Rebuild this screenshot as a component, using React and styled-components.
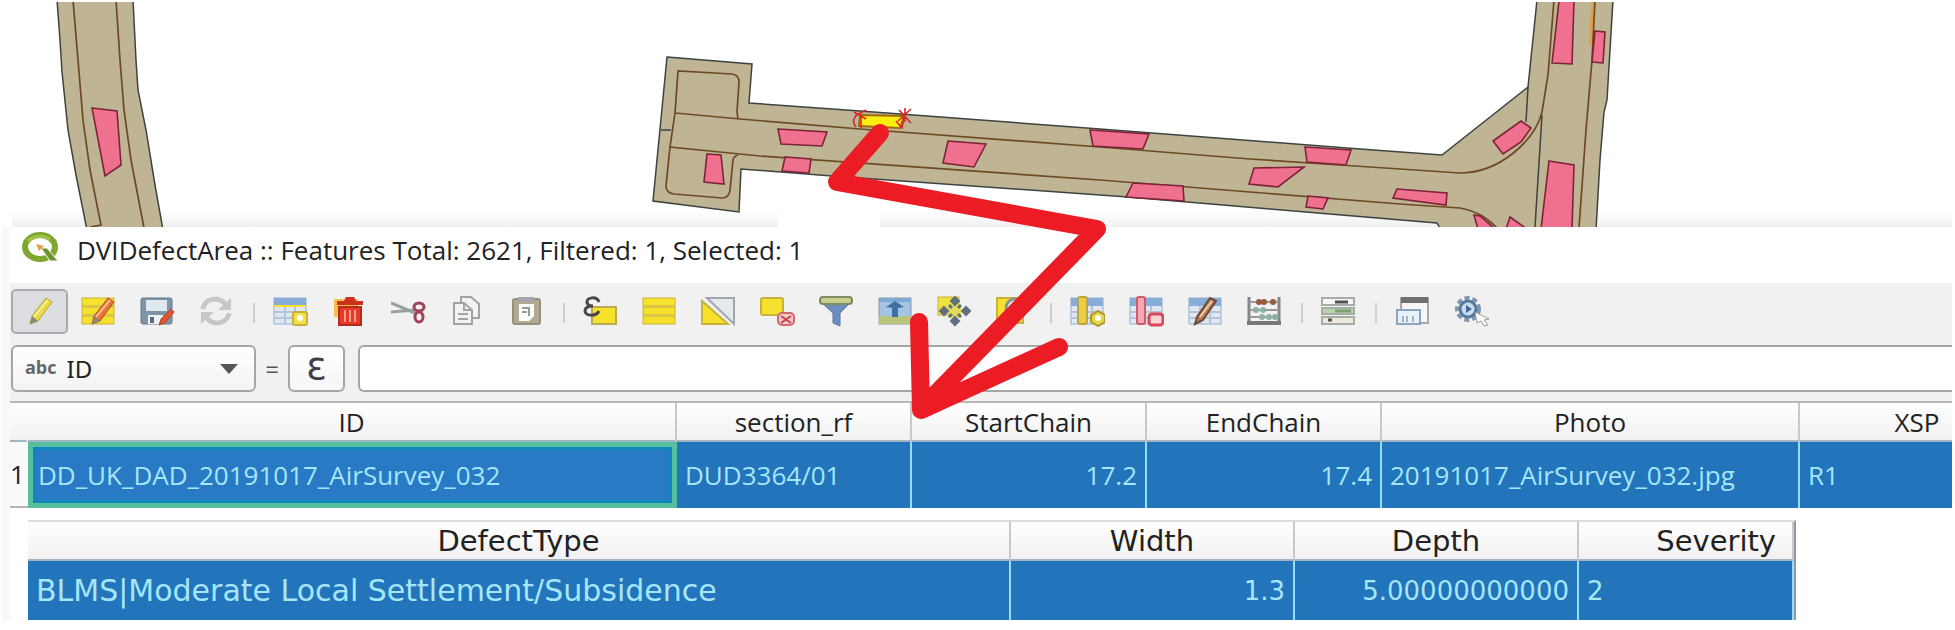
import React from 'react'
import styled, { createGlobalStyle } from 'styled-components'

const GlobalStyle = createGlobalStyle`
  * {
    box-sizing: border-box;
  }

  body {
    margin: 0;
    background: #fff;
    font-family: 'Open Sans', 'Noto Sans', sans-serif;
    color: #222;
  }
`

const Page = styled.main`
  position: relative;
  overflow: hidden;
`

const MapCanvas = styled.svg`
  display: block;
  width: 100%;
`

const Arrow = styled.svg`
  position: absolute;
  top: 0;
  left: 0;
  width: 100%;
  pointer-events: none;
`

const AttributeWindow = styled.section`
  margin-right: 3px;
  padding-left: 10px;
  background: linear-gradient(90deg, #fff 2px, #f7f7f7 2px, #f9f9f9 10px, #fff 10px);
`

const TitleBar = styled.header`
  display: flex;
  align-items: flex-start;
  gap: 18px;
  height: 56px;
  padding: 5px 10px 0;
  background: #fff;

  > h1 {
    margin: 0;
    font-size: 26px;
    font-weight: 400;
    line-height: 36px;
    white-space: nowrap;
  }

  > svg {
    flex: none;
  }
`

const Toolbar = styled.div`
  display: flex;
  gap: 2px;
  padding: 6px 1px 11px;
  background: #f1f1f1;
`

const ToolButton = styled.button`
  display: flex;
  flex: none;
  align-items: center;
  justify-content: center;
  width: 57px;
  height: 45px;
  padding: 0;
  border: 2px solid ${({ $active }) => ($active ? '#a9abae' : 'transparent')};
  border-radius: 5px;
  background: ${({ $active }) => ($active ? '#dcdde0' : 'transparent')};
`

const Separator = styled.span`
  flex: none;
  width: 13px;
  height: 20px;
  margin-top: 14px;
  background: linear-gradient(#cfcfcf, #cfcfcf) center / 2px 100% no-repeat;
`

const FilterBar = styled.form`
  display: flex;
  align-items: center;
  padding: 0 0 9px 1px;
  background: #f1f1f1;
`

const FieldPicker = styled.label`
  display: flex;
  flex: none;
  align-items: center;
  gap: 10px;
  width: 245px;
  height: 47px;
  padding: 0 16px 0 12px;
  border: 2px solid #a6a6a6;
  border-radius: 6px;
  background: linear-gradient(#fff, #f3f3f3);

  > span {
    padding-bottom: 4px;
    color: #666;
    font-size: 18px;
    font-weight: 700;
  }

  > select {
    flex: 1;
    appearance: none;
    padding: 0;
    border: 0;
    background: transparent;
    color: #222;
    font-family: 'Noto Sans', sans-serif;
    font-size: 24px;
  }
`

const Equals = styled.span`
  width: 32px;
  color: #555;
  font-size: 24px;
  text-align: center;
`

const ExpressionButton = styled.button`
  flex: none;
  width: 57px;
  height: 47px;
  margin-right: 13px;
  padding: 0 0 6px;
  border: 2px solid #a6a6a6;
  border-radius: 6px;
  background: linear-gradient(#fff, #f6f6f6);
  color: #443c48;
  font-family: 'DejaVu Sans', sans-serif;
  font-size: 38px;
  line-height: 1;
`

const FilterInput = styled.input`
  flex: 1;
  min-width: 0;
  height: 47px;
  padding: 0 12px;
  border: 2px solid #a6a6a6;
  border-right: 0;
  border-radius: 6px 0 0 6px;
  background: #fff;
  font-size: 24px;
`

const Grid = styled.div`
  overflow: hidden;
  border-top: 2px solid #b9b9b9;
`

const Table = styled.table`
  table-layout: fixed;
  width: ${({ $width }) => $width}px;
  border-collapse: separate;
  border-spacing: 0;
  font-family: ${({ $font }) => $font};
`

const HeadCell = styled.th`
  height: 39px;
  padding: 0 ${({ $align }) => ($align ? 16 : 0)}px 0 0;
  border-right: 2px solid ${({ $plain }) => ($plain ? 'transparent' : '#c9c9c9')};
  border-bottom: 2px solid #a3b4c4;
  background: linear-gradient(#fff, #f1f1f1);
  background-clip: border-box;
  color: #222;
  font-size: ${({ $size }) => $size}px;
  font-weight: 400;
  line-height: 32px;
  text-align: ${({ $align }) => $align || 'center'};
`

const Cell = styled.td`
  height: ${({ $height }) => $height}px;
  padding: 0 8px;
  border-right: 2px solid #9adcf6;
  background: #2274bb;
  color: #a6e6fa;
  font-size: ${({ $size }) => $size}px;
  line-height: 32px;
  text-align: ${({ $align }) => $align || 'left'};
  white-space: nowrap;
`

const CurrentCell = styled(Cell)`
  border: 5px solid #55bfa0;
  padding-left: 5px;
  background: #287ac4;
  box-shadow: inset 0 0 0 3px #1087b8;
`

const RowNumber = styled.th`
  padding: 0;
  border-bottom: 2px solid #b5b5b5;
  background: #fafafa;
  font-size: 26px;
  font-weight: 400;
  text-align: left;
`

const DetailGrid = styled.div`
  width: 1768px;
  margin: 12px 0 9px 18px;
  border-top: 2px solid #dcdcdc;
  border-right: 2px solid #8d99a8;
`

const yellow = '#f6e12c'
const olive = '#c9b23a'

const Pencil = ({ fill, edge }) => (
  <g>
    <path d="M8 28 L10 20 L24 2 L30 6 L16 25 Z" fill={fill} stroke={edge} />
    <path d="M8 28 L10 20 L16 25 Z" fill="#8a8878" />
    <path d="M12 21 L26 4" stroke="#fff" strokeOpacity=".5" strokeWidth="2" />
  </g>
)

const Bars = () => (
  <g fill={yellow} stroke={olive}>
    <rect x="1" y="2" width="32" height="8" />
    <rect x="1" y="11" width="32" height="8" />
    <rect x="1" y="20" width="32" height="8" />
  </g>
)

const Sheet = () => (
  <g>
    <rect x="1" y="2" width="32" height="26" fill="#dfe8f2" stroke="#8fb0d4" />
    <rect x="1" y="2" width="32" height="8" fill="#88add8" />
    <path d="M1 16 H33 M1 22 H33 M12 10 V28 M22 10 V28" stroke="#b5c4d4" strokeWidth="2" />
  </g>
)

const icons = {
  edit: <Pencil fill="#ecd93b" edge="#b5a538" />,
  multiEdit: (
    <>
      <Bars />
      <g transform="translate(3 0)"><Pencil fill="#ea7530" edge="#a9502a" /></g>
    </>
  ),
  save: (
    <>
      <rect x="1" y="2" width="31" height="26" rx="2" fill="#7d95a8" stroke="#66788a" />
      <rect x="6" y="4" width="21" height="11" fill="#dfe8ef" />
      <rect x="8" y="19" width="15" height="9" fill="#f2f4f6" />
      <rect x="10" y="21" width="4" height="6" fill="#58697a" />
      <path d="M19 29 L21 23 L31 13 L34 16 L25 27 Z" fill="#e0562f" stroke="#b24b31" />
    </>
  ),
  reload: (
    <>
      <path d="M4 13 A12 11 0 0 1 26 8" fill="none" stroke="#c6c8c8" strokeWidth="5" />
      <path d="M32 2 V14 H19 Z" fill="#c6c8c8" />
      <path d="M30 17 A12 11 0 0 1 8 22" fill="none" stroke="#c6c8c8" strokeWidth="5" />
      <path d="M2 28 V16 H15 Z" fill="#c6c8c8" />
    </>
  ),
  addFeature: (
    <>
      <Sheet />
      <path d="M1 10 H33" stroke={yellow} strokeWidth="2" />
      <rect x="20" y="16" width="14" height="13" rx="2" fill="#f1e04a" stroke={olive} strokeWidth="2" />
      <circle cx="27" cy="22" r="3" fill="#fff" />
    </>
  ),
  remove: (
    <>
      <rect x="2" y="3" width="24" height="18" fill="#f5c04b" />
      <path d="M5 9 V5 H12 L14 1 H22 L24 5 H31 V9 Z" fill="#cf2f1c" />
      <rect x="7" y="11" width="22" height="18" fill="#e83b27" stroke="#b52c1c" strokeWidth="2" />
      <path d="M13 14 V26 M18 14 V26 M23 14 V26" stroke="#ff9c8e" strokeWidth="2" />
    </>
  ),
  cut: (
    <>
      <path d="M0 7 L24 17 M0 16 L24 14" stroke="#9aa09f" strokeWidth="3" />
      <ellipse cx="28" cy="11" rx="5" ry="4" fill="none" stroke="#a04255" strokeWidth="3" />
      <ellipse cx="28" cy="21" rx="4" ry="5" fill="none" stroke="#a04255" strokeWidth="3" />
    </>
  ),
  copy: (
    <g fill="#f3f3f3" stroke="#a2a4a4" strokeWidth="2">
      <path d="M11 1 H21 L29 8 V22 H11 Z" />
      <path d="M4 7 H14 L22 14 V28 H4 Z" />
      <path d="M14 7 V14 H22 M8 18 H18 M8 23 H18" fill="none" />
    </g>
  ),
  paste: (
    <>
      <rect x="4" y="3" width="27" height="25" rx="2" fill="#b3a990" stroke="#96907f" strokeWidth="2" />
      <rect x="9" y="1" width="16" height="5" fill="#a3a6aa" />
      <path d="M10 8 H25 V20 L20 25 H10 Z" fill="#fff" />
      <path d="M13 12 H20 V20 M13 16 H18" stroke="#999" strokeWidth="2" fill="none" />
    </>
  ),
  selectExpression: (
    <>
      <rect x="9" y="11" width="24" height="17" fill={yellow} stroke="#b9ab50" strokeWidth="2" />
      <path
        d="M16 6 C14 0 4 1 4 6 C4 9 7 10 10 10 C4 10 2 12 2 15 C2 20 13 21 16 15"
        fill="none"
        stroke="#4b4448"
        strokeWidth="3"
      />
    </>
  ),
  selectAll: <Bars />,
  invert: (
    <>
      <path d="M6 2 H33 V28 Z" fill="#e6eaee" stroke="#9fa6ac" strokeWidth="2" />
      <path d="M1 5 V28 H27 Z" fill={yellow} stroke={olive} strokeWidth="2" />
    </>
  ),
  deselect: (
    <>
      <rect x="1" y="2" width="22" height="17" rx="2" fill={yellow} stroke={olive} strokeWidth="2" />
      <rect x="18" y="17" width="16" height="12" rx="4" fill="#f2c9c9" stroke="#cf6a70" strokeWidth="2" />
      <path d="M21 20 L31 27 M31 20 L21 27" stroke="#c9444d" strokeWidth="2" />
    </>
  ),
  filter: (
    <>
      <path d="M3 7 H31 L21 17 V30 L14 27 V17 Z" fill="#6d8fc0" stroke="#5c779e" />
      <rect x="1" y="1" width="32" height="7" rx="3" fill="#c9cf8a" stroke="#7f8c62" strokeWidth="2" />
    </>
  ),
  moveTop: (
    <>
      <rect x="1" y="2" width="32" height="26" fill="#a3c4e4" stroke="#8797a8" />
      <path d="M1 4 H33" stroke="#7fa8d4" strokeWidth="4" />
      <rect x="1" y="20" width="32" height="8" fill="#b9c57a" />
      <path d="M17 5 L26 11 L20 12 V21 H14 V12 L8 11 Z" fill="#3f70a3" />
    </>
  ),
  pan: (
    <>
      <rect x="1" y="1" width="21" height="18" fill="#f0e23c" stroke={olive} />
      <path d="M11 9 H24 V22 H11 Z" fill="#e5dc58" />
      <path
        d="M18 1 L22 5 L18 9 L14 5 Z M18 21 L22 25 L18 29 L14 25 Z M7 11 L11 15 L7 19 L3 15 Z M29 11 L33 15 L29 19 L25 15 Z"
        fill="#5d6f80"
        stroke="#5d6f80"
        strokeWidth="2"
      />
      <path d="M12 9 L15 12 M24 9 L21 12 M12 21 L15 18 M24 21 L21 18" stroke="#5d6f80" strokeWidth="3" />
    </>
  ),
  zoom: (
    <>
      <rect x="1" y="2" width="26" height="25" fill={yellow} stroke={olive} strokeWidth="2" />
      <circle cx="19" cy="12" r="9" fill="#e8edf0" stroke="#8b9298" strokeWidth="3" />
    </>
  ),
  newField: (
    <>
      <Sheet />
      <rect x="8" y="1" width="9" height="27" rx="2" fill="#e8cf45" stroke="#bda53a" strokeWidth="2" />
      <path d="M21 19 L28 15 L35 19 V26 L28 30 L21 26 Z" fill="#e7d540" stroke="#a9993a" strokeWidth="2" />
      <circle cx="28" cy="22" r="3" fill="#fff" />
    </>
  ),
  deleteField: (
    <>
      <Sheet />
      <rect x="8" y="1" width="8" height="27" rx="2" fill="#f2a9b3" stroke="#d2596c" strokeWidth="2" />
      <rect x="20" y="18" width="14" height="11" rx="3" fill="#f6d5d6" stroke="#d9485c" strokeWidth="3" />
    </>
  ),
  editField: (
    <>
      <Sheet />
      <path d="M7 28 L9 21 L22 2 L28 5 L15 24 Z" fill="#b97b55" stroke="#6e4a38" strokeWidth="2" />
      <path d="M12 21 L24 5" stroke="#ead0b4" strokeWidth="2" />
    </>
  ),
  calculator: (
    <>
      <path d="M2 1 V29 M32 1 V29" stroke="#858585" strokeWidth="3" />
      <path d="M0 27 H34" stroke="#777" strokeWidth="4" />
      <path d="M2 6 H32 M2 14 H32 M2 21 H32" stroke="#999" strokeWidth="2" />
      <g fill="#96593f">
        <circle cx="12" cy="6" r="3" />
        <circle cx="17" cy="6" r="3" />
        <circle cx="26" cy="6" r="3" />
      </g>
      <g fill="#8db0a6">
        <circle cx="9" cy="14" r="3" />
        <circle cx="16" cy="14" r="3" />
        <circle cx="15" cy="21" r="3" />
        <circle cx="22" cy="21" r="3" />
        <circle cx="28" cy="21" r="3" />
      </g>
    </>
  ),
  conditional: (
    <>
      <g fill="#f6f6f6" stroke="#a6ada5" strokeWidth="2">
        <rect x="1" y="2" width="32" height="7" />
        <rect x="1" y="12" width="32" height="6" fill="#bcd3ae" />
        <rect x="1" y="21" width="32" height="7" fill="#eee9dd" />
      </g>
      <path d="M14 6 H27" stroke="#4c5256" strokeWidth="3" />
      <path d="M14 15 H30" stroke="#7da073" strokeWidth="3" />
      <path d="M7 24 H11" stroke="#5c4c42" strokeWidth="3" />
    </>
  ),
  dock: (
    <>
      <rect x="6" y="2" width="27" height="25" fill="#f7f7f7" stroke="#a8a8a8" strokeWidth="2" />
      <rect x="6" y="1" width="27" height="6" fill="#6f6f72" />
      <rect x="2" y="14" width="23" height="14" fill="#e9f0f8" stroke="#8ba4c2" strokeWidth="2" />
      <path d="M8 20 V26 M12 20 V26 M18 20 V26" stroke="#9db4cd" strokeWidth="2" />
    </>
  ),
  actions: (
    <>
      <circle cx="14" cy="13" r="11" fill="none" stroke="#8296ab" strokeWidth="4" strokeDasharray="5 3" />
      <circle cx="14" cy="13" r="8" fill="#c9dcec" stroke="#56799f" strokeWidth="3" />
      <path d="M12 9 L18 13 L12 17 Z" fill="#416a98" />
      <path d="M21 16 L35 23 L30 24 L34 29 L30 30 L27 25 L23 27 Z" fill="#fff" stroke="#95999e" />
    </>
  ),
}

const toolGroups = [
  [
    ['edit', 'Toggle editing mode'],
    ['multiEdit', 'Toggle multi edit mode'],
    ['save', 'Save edits'],
    ['reload', 'Reload the table'],
  ],
  [
    ['addFeature', 'Add feature'],
    ['remove', 'Delete selected features'],
    ['cut', 'Cut selected rows'],
    ['copy', 'Copy selected rows'],
    ['paste', 'Paste features'],
  ],
  [
    ['selectExpression', 'Select features using an expression'],
    ['selectAll', 'Select all'],
    ['invert', 'Invert selection'],
    ['deselect', 'Deselect all'],
    ['filter', 'Filter features'],
    ['moveTop', 'Move selection to top'],
    ['pan', 'Pan map to selected rows'],
    ['zoom', 'Zoom map to selected rows'],
  ],
  [
    ['newField', 'New field'],
    ['deleteField', 'Delete field'],
    ['editField', 'Organize columns'],
    ['calculator', 'Open field calculator'],
  ],
  [['conditional', 'Conditional formatting']],
  [
    ['dock', 'Dock attribute table'],
    ['actions', 'Actions'],
  ],
]

// closed polygons, in map canvas units
const defects = [
  '92,108 117,111 121,165 105,176',
  '778,129 827,132 822,146 781,144',
  '785,157 811,159 809,173 782,171',
  '707,154 721,155 724,184 704,182',
  '948,141 986,144 974,167 943,163',
  '1090,130 1149,134 1143,149 1093,146',
  '1133,183 1183,186 1184,201 1126,197',
  '1254,168 1304,167 1278,187 1249,184',
  '1305,147 1351,150 1346,165 1307,162',
  '1308,196 1328,198 1323,209 1306,207',
  '1397,189 1447,193 1446,205 1393,198',
  '1474,215 1480,216 1495,229 1478,229',
  '1510,217 1527,229 1506,229',
  '1521,121 1531,128 1521,142 1503,154 1493,141',
  '1559,1 1574,1 1572,64 1552,63',
  '1595,31 1605,32 1603,63 1592,62',
  '1549,161 1574,165 1572,229 1541,229',
]

const RoadMap = () => (
  <MapCanvas viewBox="0 0 1955 227" role="img" aria-label="Road sections with defect areas">
    <defs>
      <linearGradient id="shade" x1="0" y1="0" x2="0" y2="1">
        <stop offset="0" stopColor="#fff" />
        <stop offset="1" stopColor="#f0f0f0" />
      </linearGradient>
      <clipPath id="canvas">
        <rect y="2" width="1955" height="225" />
      </clipPath>
    </defs>
    <g clipPath="url(#canvas)">
      <rect x="12" y="210" width="766" height="17" fill="url(#shade)" />
      <rect x="880" y="210" width="1072" height="17" fill="url(#shade)" />
      <g fill="#bfb494" stroke="#3c4340" strokeWidth="1.5">
        <path d="M57 0 L60 40 L62 72 L68 130 L76 175 L87 230 H163 L155 185 L146 130 L138 90 L136 60 L133 0 Z" />
        <path d="M667 57 L752 64 L749 103 L860 111 L1100 129 L1360 149 L1442 155 L1528 87 L1537 0 H1613 L1607 100 L1604 112 L1600 160 L1596 230 H1441 L1437 223 L1270 209 L1128 197 L832 176 L741 169 L739 212 L653 201 Z" />
      </g>
      <path d="M1528 87 L1526 122 M1542 115 L1535 227 M661 130 L671 130" stroke="#3c4340" strokeWidth="1.5" />
      <path d="M1593 2 L1590 45" stroke="#e0a04a" strokeWidth="3" />
      <g fill="none" stroke="#6e4a24" strokeWidth="1.7">
        <path d="M73 0 L78 60 L83 120 L90 170 L101 225 L90 227" />
        <path d="M116 0 L120 60 L124 110 L131 160 L144 228" />
        <path d="M675 113 L678 71 L732 74 Q739 75 739 82 L737 112 L738 119" />
        <path d="M675 113 L740 119 L860 129 L1100 147 L1250 159 L1340 165 L1400 169 L1460 173 C1500 173 1535 140 1542 112 L1548 75 L1554 0" />
        <path d="M675 113 L670 147 L760 156 L1100 180 L1250 192 L1400 204 L1460 208 C1475 211 1485 216 1497 228" />
        <path d="M670 147 L666 186 Q666 193 674 194 L722 198 Q729 198 730 190 L733 160 Q734 156 738 155" />
        <path d="M1595 0 L1592 60 L1586 130 L1579 228" />
      </g>
      <g fill="#f0708f" stroke="#7d2438" strokeWidth="1.6">
        {defects.map((points) => (
          <polygon key={points} points={points} />
        ))}
      </g>
      <polygon points="860,115 904,116 900,128 859,126" fill="#fbee10" stroke="#a46a10" strokeWidth="2" />
      <g fill="none" stroke="#d9262b" strokeWidth="1.6">
        <path d="M899 110 L911 123 M911 109 L898 121 M905 108 V122 M854 112 L866 119 M866 110 L855 116 M861 115 V128" />
        <path d="M856 116 Q851 121 856 127 M896 121 L902 128 L904 117" />
      </g>
    </g>
  </MapCanvas>
)

const Logo = () => (
  <svg width="39" height="32" viewBox="0 0 39 32" aria-hidden="true">
    <ellipse cx="20" cy="15" rx="15" ry="12" fill="none" stroke="#7fa62f" strokeWidth="6" />
    <path d="M8 9 A15 11 0 0 1 30 7" fill="none" stroke="#a3c14c" strokeWidth="3" />
    <path d="M21 16 L27 16 L38 29 L30 29 Z" fill="#6c9433" stroke="#f4f7ea" />
    <path d="M16 12 L24 14 L19 19 Z" fill="#e3a046" />
  </svg>
)

const featureColumns = [
  { name: 'ID', width: 649, value: 'DD_UK_DAD_20191017_AirSurvey_032' },
  { name: 'section_rf', width: 235, value: 'DUD3364/01' },
  { name: 'StartChain', width: 235, value: '17.2', align: 'right' },
  { name: 'EndChain', width: 235, value: '17.4', align: 'right' },
  { name: 'Photo', width: 418, value: '20191017_AirSurvey_032.jpg' },
  { name: 'XSP', width: 236, value: 'R1' },
]

const defectColumns = [
  { name: 'DefectType', width: 983, value: 'BLMS|Moderate Local Settlement/Subsidence', size: 30 },
  { name: 'Width', width: 284, value: '1.3', align: 'right', size: 26 },
  { name: 'Depth', width: 284, value: '5.00000000000', align: 'right', size: 26 },
  { name: 'Severity', width: 215, value: '2', headAlign: 'right', size: 26 },
]

const FeatureTable = () => (
  <Grid>
    <Table $width={2026} $font="'Open Sans', sans-serif">
      <colgroup>
        <col width="18" />
        {featureColumns.map(({ name, width }) => (
          <col key={name} width={width} />
        ))}
      </colgroup>
      <thead>
        <tr>
          <HeadCell as="td" $plain />
          {featureColumns.map(({ name }) => (
            <HeadCell key={name} scope="col" $size={26}>{name}</HeadCell>
          ))}
        </tr>
      </thead>
      <tbody>
        <tr>
          <RowNumber scope="row">1</RowNumber>
          {featureColumns.map(({ name, value, align }, i) => {
            const Item = i === 0 ? CurrentCell : Cell
            return (
              <Item key={name} $height={66} $size={26} $align={align}>{value}</Item>
            )
          })}
        </tr>
      </tbody>
    </Table>
  </Grid>
)

const DefectTable = () => (
  <DetailGrid>
    <Table $width={1766} $font="'DejaVu Sans', sans-serif">
      <colgroup>
        {defectColumns.map(({ name, width }) => (
          <col key={name} width={width} />
        ))}
      </colgroup>
      <thead>
        <tr>
          {defectColumns.map(({ name, headAlign }) => (
            <HeadCell key={name} scope="col" $size={29} $align={headAlign}>{name}</HeadCell>
          ))}
        </tr>
      </thead>
      <tbody>
        <tr>
          {defectColumns.map(({ name, value, align, size }) => (
            <Cell key={name} $height={59} $size={size} $align={align}>{value}</Cell>
          ))}
        </tr>
      </tbody>
    </Table>
  </DetailGrid>
)

const App = () => (
  <Page>
    <GlobalStyle />
    <RoadMap />
    <AttributeWindow>
      <TitleBar>
        <Logo />
        <h1>DVIDefectArea :: Features Total: 2621, Filtered: 1, Selected: 1</h1>
      </TitleBar>
      <Toolbar role="toolbar">
        {toolGroups.map((tools, i) => (
          <React.Fragment key={`Group_${i}`}>
            {i > 0 && <Separator />}
            {tools.map(([icon, label]) => (
              <ToolButton key={icon} type="button" aria-label={label} $active={icon === 'edit'}>
                <svg width="35" height="31" viewBox="0 0 35 31">{icons[icon]}</svg>
              </ToolButton>
            ))}
          </React.Fragment>
        ))}
      </Toolbar>
      <FilterBar>
        <FieldPicker>
          <span>abc</span>
          <select defaultValue="ID">
            <option>ID</option>
          </select>
          <svg width="18" height="10" viewBox="0 0 18 10" aria-hidden="true">
            <path d="M0 0 H18 L9 10 Z" fill="#555" />
          </svg>
        </FieldPicker>
        <Equals>=</Equals>
        <ExpressionButton type="button" aria-label="Expression dialog">ε</ExpressionButton>
        <FilterInput type="text" aria-label="Field value" />
      </FilterBar>
      <FeatureTable />
      <DefectTable />
    </AttributeWindow>
    <Arrow viewBox="0 0 1955 630" aria-hidden="true">
      <path
        d="M880 133 L837 182 L1097 229 L924 406 M919 322 L921 410 L1059 347"
        fill="none"
        stroke="#ec1c24"
        strokeWidth="18"
        strokeLinecap="round"
        strokeLinejoin="round"
      />
    </Arrow>
  </Page>
)

export default App
